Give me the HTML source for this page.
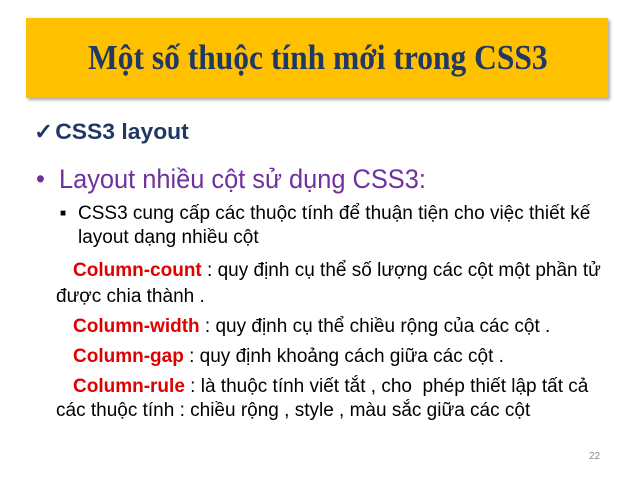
<!DOCTYPE html>
<html><head><meta charset="utf-8"><style>
body{margin:0;width:638px;height:479px;background:#fff;position:relative;overflow:hidden;font-family:"Liberation Sans",sans-serif}
.ban{position:absolute;left:26px;top:18px;width:582px;height:80px;background:#FFC000;box-shadow:2px 2px 3px #aaa}
.ttl{position:absolute;left:88px;top:36px;white-space:nowrap;transform-origin:left center;transform:scaleX(.9);font-family:"Liberation Serif",serif;font-weight:bold;font-size:35px;line-height:44px;color:#1F3864}
.l{position:absolute;white-space:nowrap;transform-origin:left center;line-height:22px}
.s{font-size:19px;transform:scaleX(1.0)}
.r{color:#E00000;font-weight:bold}
</style></head><body>
<div class="ban"></div>
<div class="ttl">Một số thuộc tính mới trong CSS3</div>
<div class="l" style="left:34px;top:120px;font-size:22px;line-height:24px;font-weight:bold;color:#1F3864;transform:scaleX(1.04)">✓<span style="margin-left:2px">CSS3 layout</span></div>
<div class="l" style="left:36px;top:164px;font-size:27px;line-height:30px;color:#7030A0;transform:scaleX(.94)">•&nbsp; Layout nhiều cột sử dụng CSS3:</div>
<div class="l" style="left:60px;top:203px;font-size:10px"><span style="font-size:10px">■</span></div>
<div class="l s" style="left:78px;top:203px">CSS3 cung cấp các thuộc tính để thuận tiện cho việc thiết kế</div>
<div class="l s" style="left:78px;top:227px">layout dạng nhiều cột</div>
<div class="l s" style="left:73px;top:260px"><span class="r">Column-count</span> : quy định cụ thể số lượng các cột một phần tử</div>
<div class="l s" style="left:56px;top:286px">được chia thành .</div>
<div class="l s" style="left:73px;top:316px"><span class="r">Column-width</span> : quy định cụ thể chiều rộng của các cột .</div>
<div class="l s" style="left:73px;top:346px"><span class="r">Column-gap</span> : quy định khoảng cách giữa các cột .</div>
<div class="l s" style="left:73px;top:376px"><span class="r">Column-rule</span> : là thuộc tính viết tắt , cho&nbsp; phép thiết lập tất cả</div>
<div class="l s" style="left:56px;top:400px">các thuộc tính : chiều rộng , style , màu sắc giữa các cột</div>
<div style="position:absolute;left:589px;top:451px;font-size:10px;color:#888">22</div>
</body></html>
